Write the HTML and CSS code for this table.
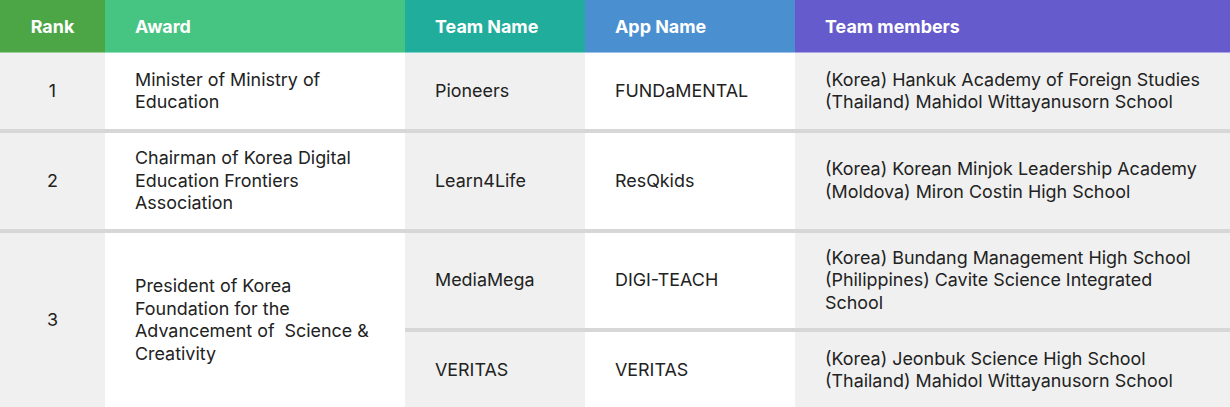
FILE: index.html
```html
<!DOCTYPE html>
<html>
<head>
<meta charset="utf-8">
<link rel="stylesheet" href="styles.css">
</head>
<body>
<table class="awards">
  <colgroup>
    <col class="c-rank"><col class="c-award"><col class="c-team"><col class="c-app"><col class="c-members">
  </colgroup>
  <thead>
    <tr class="head-row">
      <th class="h-rank">Rank</th>
      <th class="h-award">Award</th>
      <th class="h-team">Team Name</th>
      <th class="h-app">App Name</th>
      <th class="h-members">Team members</th>
    </tr>
  </thead>
  <tbody>
    <tr>
      <td class="rank">1</td>
      <td class="award">Minister of Ministry of Education</td>
      <td class="team">Pioneers</td>
      <td class="app">FUNDaMENTAL</td>
      <td class="members">(Korea) Hankuk Academy of Foreign Studies<br>(Thailand) Mahidol Wittayanusorn School</td>
    </tr>
    <tr>
      <td class="rank">2</td>
      <td class="award">Chairman of Korea Digital Education Frontiers Association</td>
      <td class="team">Learn4Life</td>
      <td class="app">ResQkids</td>
      <td class="members">(Korea) Korean Minjok Leadership Academy<br>(Moldova) Miron Costin High School</td>
    </tr>
    <tr>
      <td class="rank" rowspan="2">3</td>
      <td class="award" rowspan="2">President of Korea Foundation for the Advancement of&nbsp; Science &amp; Creativity</td>
      <td class="team">MediaMega</td>
      <td class="app">DIGI-TEACH</td>
      <td class="members">(Korea) Bundang Management High School<br>(Philippines) Cavite Science Integrated School</td>
    </tr>
    <tr>
      <td class="team">VERITAS</td>
      <td class="app">VERITAS</td>
      <td class="members">(Korea) Jeonbuk Science High School<br>(Thailand) Mahidol Wittayanusorn School</td>
    </tr>
  </tbody>
</table>
</body>
</html>
```
FILE: styles.css
```css
html, body {
  margin: 0;
  padding: 0;
  background: #ffffff;
}
body {
  font-family: Inter, "Noto Sans", "Liberation Sans", sans-serif;
  color: #222222;
}
.awards {
  width: 1230px;
  border-collapse: separate;
  border-spacing: 0;
  table-layout: fixed;
}
.c-rank { width: 105px; }
.c-award { width: 300px; }
.c-team { width: 180px; }
.c-app { width: 210px; }
.c-members { width: 435px; }

.head-row { height: 53px; }
.awards th {
  padding: 0 30px;
  text-align: left;
  color: #ffffff;
  font-size: 17.9px;
  font-weight: 700;
  border-bottom: 1px solid rgba(255, 255, 255, 0.45);
}
.awards th.h-rank { text-align: center; padding: 0; background: #4ca646; }
.h-award { background: #46c482; }
.h-team { background: #21ad9c; }
.h-app { background: #4a90d1; }
.h-members { background: #665bcc; }

.awards tbody tr { height: 80px; }
.awards tbody tr:first-child { height: 76px; }
.awards td {
  padding: 14px 30px;
  font-size: 17.9px;
  line-height: 22.5px;
  vertical-align: middle;
  border-top: 4px solid #d7d7d7;
}
.awards tbody tr:first-child td {
  border-top: 0;
}
.awards td.members {
  padding-right: 16px;
}
.awards td.rank {
  text-align: center;
  padding: 0;
  background: #f0f0f0;
}
.award { background: #ffffff; }
.team { background: #f0f0f0; }
.app { background: #ffffff; }
.members { background: #f0f0f0; }
```
